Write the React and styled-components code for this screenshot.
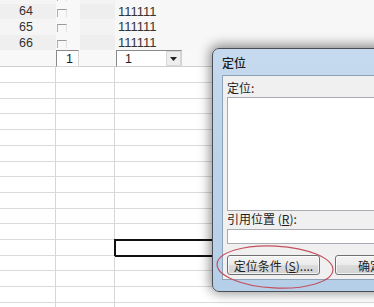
import React from "react";
import styled, { createGlobalStyle } from "styled-components";

const GlobalStyle = createGlobalStyle`
  html, body {
    margin: 0;
    padding: 0;
    background: #ffffff;
  }
  body {
    font-family: "Liberation Sans", Arial, "Noto Sans CJK SC", sans-serif;
  }
`;

const topRows = [
  { num: "63", text: "111111", shaded: false },
  { num: "64", text: "111111", shaded: true },
  { num: "65", text: "111111", shaded: false },
  { num: "66", text: "111111", shaded: true },
];

const gridRows = Array.from({ length: 16 }, (_, i) => i);
const SELECTED_ROW = 11;

const App = () => {
  return (
    <Page>
      <GlobalStyle />
      <Sheet>
        <TopList>
          {topRows.map((row) => (
            <TopRow key={row.num}>
              <NumCell $shaded={row.shaded}>{row.num}</NumCell>
              <CheckCell>
                <FakeCheck />
              </CheckCell>
              <GapCell $shaded={row.shaded} />
              <TextCell>{row.text}</TextCell>
            </TopRow>
          ))}
        </TopList>

        <InputRow>
          <span />
          <SmallInput>1</SmallInput>
          <span />
          <Select>
            <span>1</span>
            <SelectArrow>
              <svg width="7" height="4" viewBox="0 0 7 4">
                <path d="M0 0 L7 0 L3.5 4 Z" fill="#222" />
              </svg>
            </SelectArrow>
          </Select>
        </InputRow>

        <Grid>
          {gridRows.map((i) => (
            <GridRow key={i}>
              <GridCell />
              <GridCell />
              <GridCell $selected={i === SELECTED_ROW} $last />
            </GridRow>
          ))}
        </Grid>
      </Sheet>

      <Dialog>
        <TitleBar>定位</TitleBar>
        <Client>
          <Label>定位:</Label>
          <ListBox />
          <Label>
            引用位置 (<u>R</u>):
          </Label>
          <TextBox />
          <ButtonRow>
            <Button $width={93}>定位条件 (<u>S</u>)....</Button>
            <Button $width={70}>确定</Button>
          </ButtonRow>
        </Client>
      </Dialog>

      <Circle width="124" height="50" viewBox="0 0 124 50">
        <ellipse
          cx="62"
          cy="25"
          rx="58"
          ry="21"
          fill="none"
          stroke="#c4505e"
          strokeWidth="1.2"
          transform="rotate(3 62 25)"
        />
      </Circle>
    </Page>
  );
};

export default App;

const Page = styled.div`
  position: relative;
  width: 374px;
  height: 307px;
  overflow: hidden;
  background: #ffffff;
`;

const Sheet = styled.div`
  display: flex;
  flex-direction: column;
  width: 374px;
`;

const TopList = styled.div`
  display: flex;
  flex-direction: column;
  margin-top: -12px;
  background: #f5f5f5;
`;

const TopRow = styled.div`
  display: grid;
  grid-template-columns: 56px 24px 35px 1fr;
  height: 15.6px;
  align-items: center;
  font-size: 12.5px;
  color: #333;
`;

const NumCell = styled.div`
  height: 100%;
  display: flex;
  align-items: center;
  justify-content: flex-end;
  padding-right: 23px;
  background: ${(p) => (p.$shaded ? "#efefef" : "#f5f5f5")};
`;

const CheckCell = styled.div`
  height: 100%;
  display: flex;
  align-items: center;
  padding-left: 1px;
  background: #f8f8f8;
`;

const FakeCheck = styled.div`
  width: 8px;
  height: 7px;
  border-top: 1px solid #9a9a9a;
  border-left: 1px solid #b0b0b0;
  border-right: 1px solid #e2e2e2;
  margin-top: 3px;
`;

const GapCell = styled.div`
  height: 100%;
  background: ${(p) => (p.$shaded ? "#eeeeee" : "#f3f3f3")};
`;

const TextCell = styled.div`
  height: 100%;
  display: flex;
  align-items: center;
  padding-left: 3px;
  background: #f7f7f7;
  font-size: 13px;
`;

const InputRow = styled.div`
  display: grid;
  grid-template-columns: 56px 23px 37px 66px;
  height: 16px;
  background: #f8f8f8;
  border-bottom: 1px solid #d0d0d0;
`;

const SmallInput = styled.div`
  box-sizing: border-box;
  height: 17px;
  border: 1px solid #8a8a8a;
  border-right-color: #d8d8d8;
  border-bottom-color: #d8d8d8;
  background: #fff;
  font-size: 12.5px;
  color: #222;
  display: flex;
  align-items: center;
  justify-content: flex-end;
  padding-right: 5px;
`;

const Select = styled.div`
  box-sizing: border-box;
  height: 17px;
  border: 1px solid #8a8a8a;
  border-right-color: #cfcfcf;
  border-bottom-color: #cfcfcf;
  background: #fff;
  font-size: 12.5px;
  color: #222;
  display: flex;
  align-items: center;
  justify-content: space-between;
  padding-left: 8px;
`;

const SelectArrow = styled.div`
  width: 15px;
  height: 15px;
  box-sizing: border-box;
  border: 1px solid #d8d8d8;
  background: #eeeeee;
  display: flex;
  align-items: center;
  justify-content: center;
`;

const Grid = styled.div`
  display: flex;
  flex-direction: column;
`;

const GridRow = styled.div`
  display: grid;
  grid-template-columns: 56px 59px 1fr;
  height: 15.7px;
  box-sizing: border-box;
  border-bottom: 1px solid #dadada;
`;

const GridCell = styled.div`
  box-sizing: border-box;
  border-right: ${(p) => (p.$last ? "none" : "1px solid #d6d6d6")};
  ${(p) =>
    p.$selected &&
    `
    border: 2px solid #111;
    margin: -1px 0 -2px -1px;
  `}
`;

const Dialog = styled.div`
  position: absolute;
  left: 212px;
  top: 48px;
  width: 200px;
  height: 244px;
  box-sizing: border-box;
  display: flex;
  flex-direction: column;
  padding: 0 0 11px 9px;
  border: 1px solid #4a4f57;
  border-radius: 7px;
  background: linear-gradient(180deg, #c6daef 0%, #bcd3ea 40%, #b6cfe8 100%);
  box-shadow: 0 -1px 12px 2px rgba(0, 0, 0, 0.45);
`;

const TitleBar = styled.div`
  height: 26px;
  display: flex;
  align-items: center;
  font-family: "Noto Sans CJK SC", sans-serif;
  font-size: 12px;
  font-weight: 500;
  color: #1c1c1c;
`;

const Client = styled.div`
  flex: 1;
  display: flex;
  flex-direction: column;
  padding: 4px 0 0 4px;
  background: #f0f0f0;
  border: 1px solid #8ea2b8;
  border-right: none;
`;

const Label = styled.div`
  height: 16px;
  line-height: 16px;
  font-family: "Noto Sans CJK SC", sans-serif;
  font-size: 12px;
  color: #1e1e1e;
`;

const ListBox = styled.div`
  margin-top: 1px;
  height: 114px;
  background: #fff;
  border: 1px solid #a8acb2;
  border-right: none;
  box-sizing: border-box;
`;

const TextBox = styled.div`
  margin-top: 2px;
  height: 15px;
  background: #fff;
  border: 1px solid #a8acb2;
  border-right: none;
  box-sizing: border-box;
`;

const ButtonRow = styled.div`
  display: flex;
  gap: 15px;
  margin-top: 11px;
`;

const Button = styled.div`
  flex: none;
  width: ${(p) => p.$width}px;
  height: 20px;
  box-sizing: border-box;
  border: 1px solid #707070;
  border-radius: 3px;
  background: linear-gradient(180deg, #f4f4f4 0%, #ebebeb 48%, #dcdcdc 52%, #d2d2d2 100%);
  box-shadow: inset 0 0 0 1px rgba(255, 255, 255, 0.7);
  font-family: "Noto Sans CJK SC", sans-serif;
  font-size: 12px;
  color: #1e1e1e;
  display: flex;
  align-items: center;
  justify-content: center;
  white-space: nowrap;
`;

const Circle = styled.svg`
  position: absolute;
  left: 213px;
  top: 242px;
  pointer-events: none;
`;
